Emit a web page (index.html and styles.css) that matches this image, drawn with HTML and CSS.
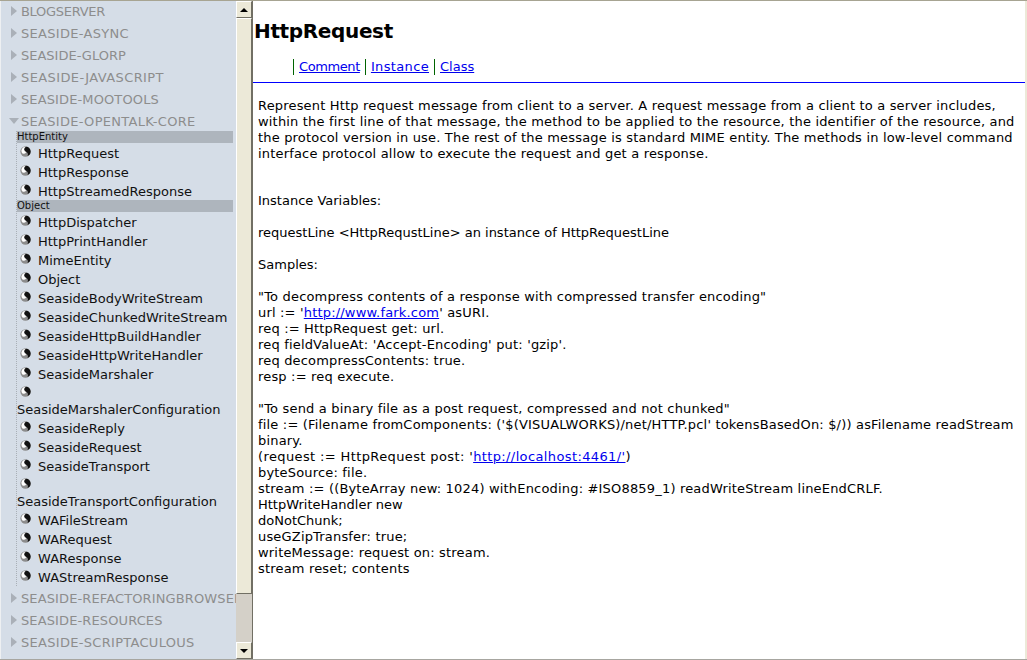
FILE: index.html
```html
<!DOCTYPE html>
<html lang="en">
<head>
<meta charset="utf-8">
<title>HttpRequest</title>
<link rel="stylesheet" href="styles.css">
</head>
<body>
<div class="frames">
  <nav class="side">
    <div class="tree">
      <div class="pkg ls-neg"><span class="tri"></span>BLOGSERVER</div>
      <div class="pkg ls-big"><span class="tri"></span>SEASIDE-ASYNC</div>
      <div class="pkg"><span class="tri"></span>SEASIDE-GLORP</div>
      <div class="pkg ls-max"><span class="tri"></span>SEASIDE-JAVASCRIPT</div>
      <div class="pkg ls-mid"><span class="tri"></span>SEASIDE-MOOTOOLS</div>
      <div class="pkg ls-big"><span class="tri open"></span>SEASIDE-OPENTALK-CORE</div>
      <div class="classes">
        <div class="super">HttpEntity</div>
        <div class="cls"><svg class="ball" viewBox="0 0 12 12"><use href="#ball"/></svg>HttpRequest</div>
        <div class="cls"><svg class="ball" viewBox="0 0 12 12"><use href="#ball"/></svg>HttpResponse</div>
        <div class="cls"><svg class="ball" viewBox="0 0 12 12"><use href="#ball"/></svg>HttpStreamedResponse</div>
        <div class="super">Object</div>
        <div class="cls"><svg class="ball" viewBox="0 0 12 12"><use href="#ball"/></svg>HttpDispatcher</div>
        <div class="cls"><svg class="ball" viewBox="0 0 12 12"><use href="#ball"/></svg>HttpPrintHandler</div>
        <div class="cls"><svg class="ball" viewBox="0 0 12 12"><use href="#ball"/></svg>MimeEntity</div>
        <div class="cls"><svg class="ball" viewBox="0 0 12 12"><use href="#ball"/></svg>Object</div>
        <div class="cls"><svg class="ball" viewBox="0 0 12 12"><use href="#ball"/></svg>SeasideBodyWriteStream</div>
        <div class="cls"><svg class="ball" viewBox="0 0 12 12"><use href="#ball"/></svg>SeasideChunkedWriteStream</div>
        <div class="cls"><svg class="ball" viewBox="0 0 12 12"><use href="#ball"/></svg>SeasideHttpBuildHandler</div>
        <div class="cls"><svg class="ball" viewBox="0 0 12 12"><use href="#ball"/></svg>SeasideHttpWriteHandler</div>
        <div class="cls"><svg class="ball" viewBox="0 0 12 12"><use href="#ball"/></svg>SeasideMarshaler</div>
        <div class="cls"><svg class="ball" viewBox="0 0 12 12"><use href="#ball"/></svg>SeasideMarshalerConfiguration</div>
        <div class="cls"><svg class="ball" viewBox="0 0 12 12"><use href="#ball"/></svg>SeasideReply</div>
        <div class="cls"><svg class="ball" viewBox="0 0 12 12"><use href="#ball"/></svg>SeasideRequest</div>
        <div class="cls"><svg class="ball" viewBox="0 0 12 12"><use href="#ball"/></svg>SeasideTransport</div>
        <div class="cls"><svg class="ball" viewBox="0 0 12 12"><use href="#ball"/></svg>SeasideTransportConfiguration</div>
        <div class="cls"><svg class="ball" viewBox="0 0 12 12"><use href="#ball"/></svg>WAFileStream</div>
        <div class="cls"><svg class="ball" viewBox="0 0 12 12"><use href="#ball"/></svg>WARequest</div>
        <div class="cls"><svg class="ball" viewBox="0 0 12 12"><use href="#ball"/></svg>WAResponse</div>
        <div class="cls"><svg class="ball" viewBox="0 0 12 12"><use href="#ball"/></svg>WAStreamResponse</div>
      </div>
      <div class="pkg ls-mid"><span class="tri"></span>SEASIDE-REFACTORINGBROWSER</div>
      <div class="pkg ls-mid"><span class="tri"></span>SEASIDE-RESOURCES</div>
      <div class="pkg ls-big"><span class="tri"></span>SEASIDE-SCRIPTACULOUS</div>
    </div>
    <div class="scrollbar">
      <div class="btn"><span class="arrow up"></span></div>
      <div class="thumb"></div>
      <div class="track"></div>
      <div class="btn"><span class="arrow down"></span></div>
    </div>
  </nav>
  <main class="content">
    <h1 class="title">HttpRequest</h1>
    <div class="tabs">
      <a class="tab tab-comment" href="#comment">Comment</a>
      <a class="tab tab-instance" href="#instance">Instance</a>
      <a class="tab" href="#class">Class</a>
    </div>
    <div class="body-text">
      <p class="intro">Represent Http request message from client to a server. A request message from a client to a server includes, within the first line of that message, the method to be applied to the resource, the identifier of the resource, and the protocol version in use. The rest of the message is standard MIME entity. The methods in low-level command interface protocol allow to execute the request and get a response.</p>
      <p class="plain">Instance Variables:</p>
      <p class="gap plain">requestLine &lt;HttpRequstLine&gt; an instance of HttpRequestLine</p>
      <p class="gap plain">Samples:</p>
      <p class="gap">"To decompress contents of a response with compressed transfer encoding"<br>
      url := '<a href="#fark">http://www.fark.com</a>' asURI.<br>
      req := HttpRequest get: url.<br>
      req fieldValueAt: 'Accept-Encoding' put: 'gzip'.<br>
      req decompressContents: true.<br>
      resp := req execute.</p>
      <p class="gap">"To send a binary file as a post request, compressed and not chunked"<br>
      file := (Filename fromComponents: ('$(VISUALWORKS)/net/HTTP.pcl' tokensBasedOn: $/)) asFilename readStream binary.<br>
      <span class="wide">(request := HttpRequest post: '<a href="#local">http://localhost:4461/'</a>)</span><br>
      byteSource: file.<br>
      stream := ((ByteArray new: 1024) withEncoding: #ISO8859_1) readWriteStream lineEndCRLF.<br>
      <span class="plain">HttpWriteHandler new</span><br>
      <span class="plain">doNotChunk;</span><br>
      useGZipTransfer: true;<br>
      writeMessage: request on: stream.<br>
      stream reset; contents</p>
    </div>
  </main>
</div>
<svg class="defs" aria-hidden="true">
  <symbol id="ball" viewBox="0 0 12 12">
    <circle cx="6" cy="6" r="5.6" fill="#8c8c8c"/>
    <path d="M6.5 .7A5.3 5.3 0 0 1 8 11 3 3 0 0 0 7 6.5 3 3 0 0 1 6.5 .7Z" fill="#111"/>
    <path d="M6.5 .7A5.3 5.3 0 0 0 1.5 5 4 4 0 0 0 3 8.5 4 4 0 0 0 7 6.5 3 3 0 0 1 6.5 .7Z" fill="#fff"/>
  </symbol>
</svg>
</body>
</html>
```
FILE: styles.css
```css
* { box-sizing: border-box; }
html, body { margin: 0; height: 100%; overflow: hidden; background: #fff; }
body { font-family: "DejaVu Sans", Verdana, sans-serif; font-size: 13px; color: #000; }
.defs { position: absolute; width: 0; height: 0; }
.frames {
  display: flex;
  width: 1027px;
  height: 660px;
  border-top: 1px solid #a7a492;
  border-bottom: 1px solid #a7a6a0;
}
.side { display: flex; width: 253px; flex: none; border-right: 1px solid #716f64; }
.tree {
  width: 236px;
  flex: none;
  overflow: hidden;
  background: #d5dde7;
  padding: 0 0 0 1px;
  border-left: 1px solid #eef0f2;
  white-space: nowrap;
}
.pkg {
  height: 22px;
  line-height: 21px;
  display: flex;
  align-items: center;
  color: #8d8d8d;
  font-size: 13px;
  padding-left: 9px;
}
.pkg:first-child { margin-top: -1px; }
.ls-neg { letter-spacing: -.3px; }
.ls-mid { letter-spacing: .12px; }
.ls-big { letter-spacing: .3px; }
.ls-max { letter-spacing: .4px; }
.tri {
  width: 0;
  height: 0;
  margin-right: 4px;
  border-style: solid;
  border-width: 5px 0 5px 6px;
  border-color: transparent transparent transparent #aab0b8;
  flex: none;
}
.tri.open {
  border-width: 6px 5px 0 5px;
  border-color: #aab0b8 transparent transparent transparent;
  margin-left: -2px;
  margin-right: 2px;
}
.classes {
  width: 217px;
  margin: -1px 0 1px 14px;
  border-left: 1px dotted #a9afb6;
  white-space: normal;
}
.super {
  height: 12px;
  line-height: 12px;
  background: #aeb5bd;
  font-size: 10px;
  color: #111;
}
.cls {
  padding-top: 3px;
  line-height: 16px;
  color: #111;
  font-size: 13px;
}
.ball {
  display: inline-block;
  width: 11px;
  height: 11px;
  margin: 0 7px 0 3px;
  vertical-align: top;
}
.scrollbar {
  width: 16px;
  flex: none;
  display: flex;
  flex-direction: column;
  background: #fff;
}
.btn {
  height: 17px;
  flex: none;
  background: #ece9d8;
  border: 1px solid;
  border-color: #fff #716f64 #716f64 #fff;
  display: flex;
  align-items: center;
  justify-content: center;
}
.arrow { width: 0; height: 0; border-style: solid; border-color: transparent; }
.arrow.up { border-width: 0 4px 4px 4px; border-bottom-color: #000; }
.arrow.down { border-width: 4px 4px 0 4px; border-top-color: #000; }
.thumb {
  height: 576px;
  flex: none;
  background: #ece9d8;
  border: 1px solid;
  border-color: #fff #716f64 #716f64 #fff;
}
.track { flex: 1; background: #d4d0c8; }
.content {
  flex: 1;
  min-width: 0;
  overflow: hidden;
  border-right: 2px solid #ece9d8;
}
.title {
  margin: 0;
  padding: 19px 0 0 1px;
  font-size: 20px;
  line-height: 23px;
  font-weight: bold;
  letter-spacing: -.35px;
}
.tabs {
  height: 40px;
  padding: 16px 0 0 40px;
  border-bottom: 1px solid #0000ff;
  display: flex;
  align-items: flex-start;
}
.tab {
  border-left: 1px solid #006400;
  padding: 0 5px;
  line-height: 16px;
  height: 16px;
}
.tab-comment { letter-spacing: -.4px; }
.tab-instance { letter-spacing: .35px; }
a { color: #0000ee; }
.body-text { padding: 15px 4px 0 5px; line-height: 16px; letter-spacing: .18px; }
p { margin: 0; }
.intro { margin-bottom: 31px; }
.gap { margin-top: 16px; }
.plain { letter-spacing: 0; }
.wide { letter-spacing: .38px; }
```
